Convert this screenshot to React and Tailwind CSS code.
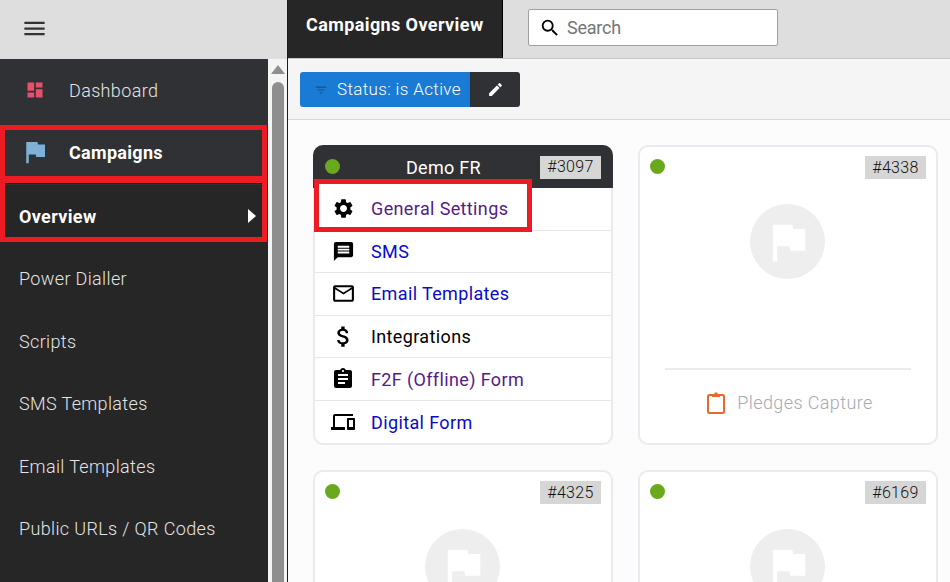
import React from 'react';
import {
  MdMenu, MdDashboard, MdFlag, MdSearch, MdFilterList, MdEdit, MdSettings, MdMessage,
  MdMailOutline, MdAttachMoney, MdAssignment, MdDevices,
} from 'react-icons/md';

const subItems = ['Power Dialler', 'Scripts', 'SMS Templates', 'Email Templates', 'Public URLs / QR Codes'];

const links = [
  { label: 'General Settings', Icon: MdSettings, color: 'text-[#551a8b]', size: 'w-[23px] h-[23px]' },
  { label: 'SMS', Icon: MdMessage, color: 'text-[#0a0ac8]', size: 'w-[23px] h-[23px]' },
  { label: 'Email Templates', Icon: MdMailOutline, color: 'text-[#0a0ac8]', size: 'w-[25px] h-[25px]' },
  { label: 'Integrations', Icon: MdAttachMoney, color: 'text-black', size: 'w-[27px] h-[27px]' },
  { label: 'F2F (Offline) Form', Icon: MdAssignment, color: 'text-[#551a8b]', size: 'w-[24px] h-[24px]' },
  { label: 'Digital Form', Icon: MdDevices, color: 'text-[#0a0ac8]', size: 'w-[24px] h-[24px]' },
];

const Dot = () => <span className="block w-[15px] h-[15px] rounded-full bg-[#6aa81e]" />;

const IdBadge = ({ id }) => (
  <span className="flex items-center justify-center w-[61px] h-[23px] bg-[#d6d6d6] text-[16px] font-light tracking-[0.3px] text-[#111]">
    {id}
  </span>
);

const FlagCircle = () => (
  <div className="mx-auto w-[75px] h-[75px] rounded-full bg-[#eeeeee] flex items-center justify-center">
    <MdFlag className="w-[52px] h-[52px] text-white" />
  </div>
);

const ClipboardIcon = () => (
  <svg viewBox="0 0 20 24" className="w-[20px] h-[24px]" fill="none" stroke="#e8692c" strokeWidth="2">
    <rect x="2" y="4" width="16" height="18" rx="1.5" />
    <path d="M6 4.5h8M10 1.5v3" strokeWidth="3" />
  </svg>
);

const EmptyCard = ({ id, footer }) => (
  <div className="h-[300px] bg-white border-2 border-[#eaeaf0] rounded-[10px] pl-[10px] pr-[10px] pt-[9px]">
    <div className="flex items-start justify-between">
      <span className="mt-[3px] block"><Dot /></span>
      <IdBadge id={id} />
    </div>
    <div className="mt-[25px] pr-[1px]"><FlagCircle /></div>
    {footer && (
      <div className="mt-[89px] mx-[15px] border-t-2 border-[#eaeaf0] flex items-center justify-center gap-[11px] pt-[19px] pl-[3px]">
        <ClipboardIcon />
        <span className="text-[18px] font-light tracking-[0.4px] text-[#a6a9b6]">Pledges Capture</span>
      </div>
    )}
  </div>
);

const App = () => {
  return (
    <div className="relative flex w-[950px] h-[582px] overflow-hidden bg-[#fcfcfc] font-['Roboto',sans-serif]">
      {/* Left column */}
      <aside className="w-[288px] shrink-0 flex flex-col border-r border-[#1c1c1c]">
        <div className="h-[59px] bg-[#dedede] flex items-center pl-[21px] pb-[2px]">
          <MdMenu className="w-[27px] h-[27px] text-[#333]" />
        </div>
        <div className="flex-1 flex min-h-0">
          <nav className="w-[268px] bg-[#262626]">
            <div className="h-[66px] bg-[#303135] flex items-center pb-[4px]">
              <span className="w-[69px] flex justify-center">
                <MdDashboard className="w-[20px] h-[20px] text-[#e8506a]" />
              </span>
              <span className="text-[18px] font-light tracking-[0.35px] text-[#e4e4e4]">Dashboard</span>
            </div>
            <div className="h-[60px] bg-[#303135] flex items-center pb-[6px]">
              <span className="w-[69px] flex justify-center">
                <MdFlag className="w-[30px] h-[30px] text-[#7db1d6]" />
              </span>
              <span className="text-[18px] font-bold tracking-[0.3px] text-white">Campaigns</span>
            </div>
            <div className="h-[62.3px] flex items-center justify-between pl-[19px] pr-[12px]">
              <span className="text-[18px] font-bold tracking-[0.35px] text-white">Overview</span>
              <span className="w-0 h-0 border-y-[7px] border-y-transparent border-l-[8px] border-l-white" />
            </div>
            {subItems.map(item => (
              <div key={item} className="h-[62.5px] flex items-center pl-[19px] text-[18px] font-light tracking-[0.36px] text-[#e4e4e4]">
                {item}
              </div>
            ))}
          </nav>
          <div className="w-[19px] bg-[#f4f4f4] flex flex-col items-center pt-[6px]">
            <span className="w-0 h-0 border-x-[7px] border-x-transparent border-b-[9px] border-b-[#8e8e8e]" />
            <span className="mt-[8px] flex-1 w-[12px] rounded-t-full bg-[#8e8e8e]" />
          </div>
        </div>
      </aside>

      {/* Main column */}
      <main className="flex-1 min-w-0 flex flex-col">
        <header className="h-[59px] shrink-0 bg-[#dedede] border-b border-[#c8c8c8] flex">
          <div className="w-[215px] h-[58px] bg-[#262626] border-r border-black pl-[18px] pt-[11px] text-[18px] font-bold tracking-[0.4px] text-white">
            Campaigns Overview
          </div>
          <div className="ml-[25px] mt-[9px] w-[250px] h-[37px] bg-white border border-[#a0a0a0] rounded-[2px] flex items-center pl-[10px]">
            <MdSearch className="w-[22px] h-[22px] text-black" />
            <span className="ml-[6px] text-[18px] text-[#757575] tracking-[-0.25px]">Search</span>
          </div>
        </header>

        <div className="h-[61px] shrink-0 bg-[#f5f5f5] border-b border-[#d8d8d8] pl-[12px] pt-[13px]">
          <div className="flex w-[220px] h-[35px] rounded-[3px] overflow-hidden">
            <div className="w-[170px] bg-[#1a7bd4] flex items-center pl-[14px]">
              <MdFilterList className="w-[14px] h-[14px] text-[#1f4f80]" />
              <span className="ml-[9px] text-[17px] font-light tracking-[0.35px] text-white">Status: is Active</span>
            </div>
            <div className="flex-1 bg-[#303135] flex items-center justify-center">
              <MdEdit className="w-[17px] h-[17px] text-white" />
            </div>
          </div>
        </div>

        <div className="flex-1 min-h-0 overflow-hidden pl-[25px] pt-[25px]">
          <div className="grid grid-cols-[300px_300px] gap-[25px]">
            {/* Open card with its link list */}
            <div className="h-[300px] bg-white border-2 border-t-0 border-[#eaeaf0] rounded-[10px] flex flex-col">
              <div className="h-[43px] shrink-0 -mx-[2px] bg-[#303135] rounded-t-[10px] flex items-center pl-[12px] pr-[12px]">
                <Dot />
                <span className="flex-1 text-center text-[18px] tracking-[0.3px] text-white pl-[7px] pt-[1px]">Demo FR</span>
                <span className="mt-[1px]"><IdBadge id="#3097" /></span>
              </div>
              {links.map(({ label, Icon, color, size }, i) => (
                <div key={label} className={`h-[42.6px] shrink-0 flex items-center ${i < links.length - 1 ? 'border-b border-[#e6e6ec]' : ''}`}>
                  <span className="w-[56px] flex justify-center">
                    <Icon className={`${size} text-black`} />
                  </span>
                  <span className={`text-[18px] tracking-[0.37px] ${color}`}>{label}</span>
                </div>
              ))}
            </div>
            <EmptyCard id="#4338" footer />
            <EmptyCard id="#4325" />
            <EmptyCard id="#6169" />
          </div>
        </div>
      </main>

      {/* Red annotation boxes drawn over the screenshot */}
      <div className="absolute left-0 top-[125px] w-[267px] h-[58px] border-[#ed1c24] border-x-[5px] border-t-[5px] border-b-[7px]" />
      <div className="absolute left-0 top-[183px] w-[267px] h-[59px] border-[#ed1c24] border-x-[5px] border-b-[5px]">
        <div className="h-[1px] bg-black" />
      </div>
      <div className="absolute left-[314px] top-[179px] w-[218px] h-[53px] border-[5px] border-[#ed1c24]">
        <div className="h-[4px] bg-white" />
      </div>
    </div>
  );
};

export default App;
